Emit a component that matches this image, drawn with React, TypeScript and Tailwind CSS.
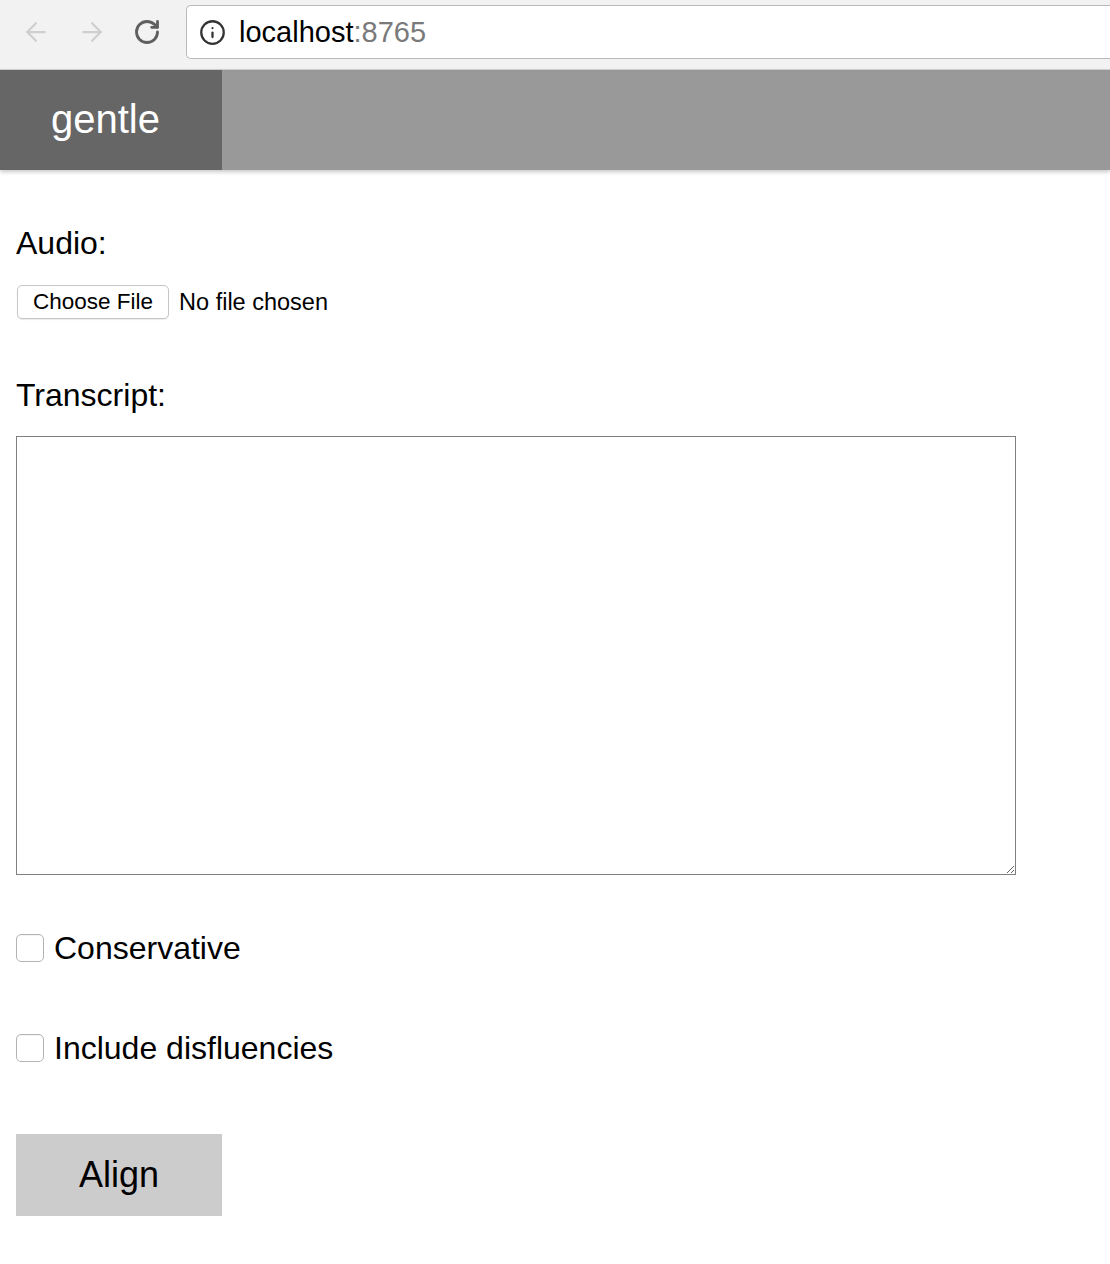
import { ArrowLeft, ArrowRight, RotateCw, Info } from "lucide-react";

const font = { fontFamily: '"Liberation Sans", Arial, sans-serif' };

// ── Fake browser chrome ──────────────────────────────────────
function BrowserBar() {
  return (
    <div className="flex h-[70px] items-start border-b border-[#d2d2d2] bg-[#f2f2f2]">
      <div className="flex h-[64px] items-center gap-[26px] pl-[21px] pr-[25px]">
        <ArrowLeft size={30} strokeWidth={1.8} className="text-[#cfcfcf]" />
        <ArrowRight size={30} strokeWidth={1.8} className="text-[#cfcfcf]" />
        <RotateCw size={28} strokeWidth={2.4} className="text-[#5f5f5f]" />
      </div>
      <div className="mt-[5px] flex h-[54px] flex-1 items-center gap-[13px] rounded-l-[5px] border border-r-0 border-[#bababa] bg-white pl-[12px]">
        <Info size={27} strokeWidth={2} className="text-[#333]" />
        <span className="text-[29px] leading-none text-black">
          localhost<span className="text-[#7a7a7a]">:8765</span>
        </span>
      </div>
    </div>
  );
}

function Checkbox({ label }: { label: string }) {
  return (
    <label className="flex h-[38px] items-center gap-[10px]">
      <span className="h-[28px] w-[28px] rounded-[5px] border border-[#b4b4b4] bg-white shadow-[inset_0_1px_1px_rgba(0,0,0,0.05)]" />
      <span className="text-[32px] leading-[38px] text-black">{label}</span>
    </label>
  );
}

export default function App() {
  return (
    <div className="min-h-[1264px] bg-white" style={font}>
      <BrowserBar />

      {/* Header */}
      <div className="relative flex h-[100px] bg-[#999999] shadow-[0_2px_4px_rgba(0,0,0,0.22)]">
        <div className="flex w-[222px] items-center justify-center bg-[#666666] pb-[2px] pr-[11px]">
          <span className="text-[40px] leading-none text-white">gentle</span>
        </div>
      </div>

      {/* Form */}
      <div className="px-[16px]">
        <div className="mt-[54px] text-[32px] leading-[38px] text-black">Audio:</div>

        <div className="mt-[23px] flex h-[34px] items-center gap-[10px]">
          <span className="ml-[1px] flex h-[34px] items-center rounded-[5px] border border-[#c6c6c6] bg-white px-[15px] text-[22.5px] text-black shadow-[0_1px_1px_rgba(0,0,0,0.08)]">
            Choose File
          </span>
          <span className="text-[23.5px] leading-[34px] text-black">No file chosen</span>
        </div>

        <div className="mt-[57px] text-[32px] leading-[38px] text-black">Transcript:</div>

        <textarea className="mt-[22px] block h-[439px] w-[1000px] border border-[#808080] bg-white p-1 outline-none" />

        <div className="mt-[54px]">
          <Checkbox label="Conservative" />
        </div>
        <div className="mt-[62px]">
          <Checkbox label="Include disfluencies" />
        </div>

        <button className="mt-[67px] flex h-[82px] w-[206px] items-center justify-center bg-[#cccccc] text-[36px] text-black">
          Align
        </button>
      </div>
    </div>
  );
}
